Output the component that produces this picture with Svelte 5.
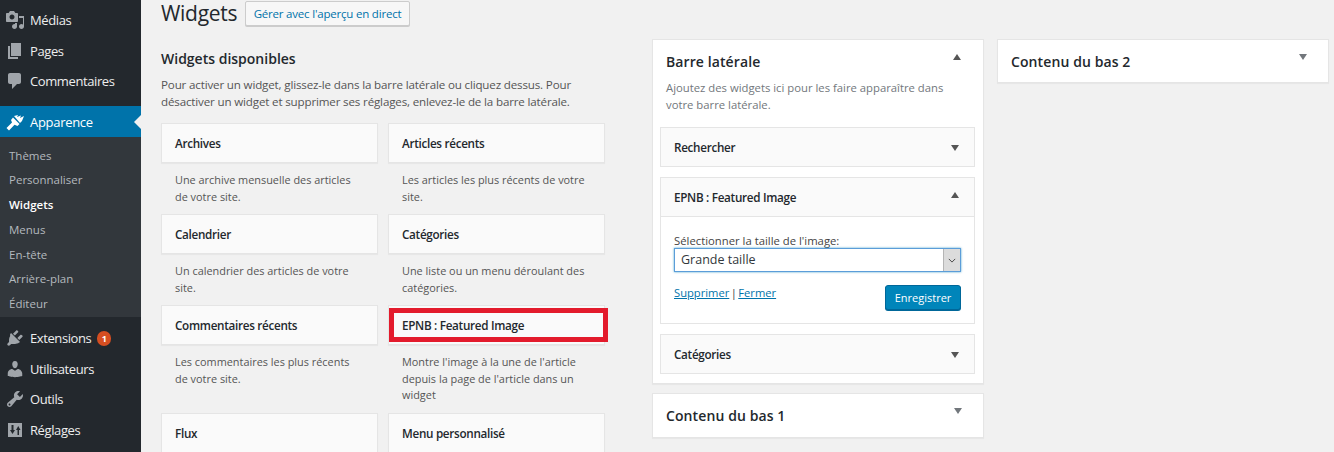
<script>
  const topMenu = [
    { label: 'Médias', icon: 'media' },
    { label: 'Pages', icon: 'pages' },
    { label: 'Commentaires', icon: 'comments' },
  ]
  const subMenu = ['Thèmes', 'Personnaliser', 'Widgets', 'Menus', 'En-tête', 'Arrière-plan', 'Éditeur']
  const bottomMenu = [
    { label: 'Extensions', icon: 'plugins', badge: 1 },
    { label: 'Utilisateurs', icon: 'users' },
    { label: 'Outils', icon: 'tools' },
    { label: 'Réglages', icon: 'settings' },
  ]
  const available = [
    { name: 'Archives', desc: 'Une archive mensuelle des articles de votre site.' },
    { name: 'Articles récents', desc: 'Les articles les plus récents de votre site.' },
    { name: 'Calendrier', desc: 'Un calendrier des articles de votre site.' },
    { name: 'Catégories', desc: 'Une liste ou un menu déroulant des catégories.' },
    { name: 'Commentaires récents', desc: 'Les commentaires les plus récents de votre site.' },
    { name: 'EPNB : Featured Image', desc: "Montre l'image à la une de l'article depuis la page de l'article dans un widget", marked: true },
    { name: 'Flux', desc: '' },
    { name: 'Menu personnalisé', desc: '' },
  ]
</script>

{#snippet icon(name)}
  <svg class="icon" viewBox="0 0 20 20" aria-hidden="true">
    {#if name === 'media'}
      <path d="M13 11V4c0-.55-.45-1-1-1h-1.670L9 1H5L3.670 3H2c-.55 0-1 .45-1 1v7c0 .55.45 1 1 1h10c.55 0 1-.45 1-1zM7 4.500c1.380 0 2.500 1.120 2.500 2.500S8.380 9.500 7 9.500 4.500 8.380 4.500 7 5.620 4.500 7 4.500zM14 6h5v10.500c0 1.380-1.120 2.500-2.500 2.500S14 17.880 14 16.500s1.120-2.500 2.500-2.500c.57 0 1.080.19 1.500.51V8h-4V6zm-4 8.050V13h2v3.500c0 1.380-1.120 2.500-2.500 2.500S7 17.880 7 16.500 8.120 14 9.500 14c.17 0 .34.02.5.05z" fill-rule="evenodd"/>
    {:else if name === 'pages'}
      <path d="M6 15V2h10v13H6zm-1 1h8v2H3V5h2v11z"/>
    {:else if name === 'comments'}
      <path d="M5 2h9c1.100 0 2 .9 2 2v7c0 1.100-.9 2-2 2h-2l-5 5v-5H5c-1.100 0-2-.9-2-2V4c0-1.100.9-2 2-2z"/>
    {:else if name === 'brush'}
      <path d="M9 4l4-1-1 2 4-1.500-1 2.500 4-2-2 5-2 2zM8 5.500l6.500 6.500-2 2-3-1.200L4 18.500 1.500 16l5.500-5.500-1-2.500z"/>
    {:else if name === 'plugins'}
      <path d="M13.110 4.360L9.870 7.600 8 5.730l3.240-3.240c.35-.34 1.050-.2 1.560.32.520.510.660 1.210.310 1.550zm-8 1.770l.910-1.120 9.010 9.010-1.190.840c-.710.710-2.630 1.160-3.820 1.160H6.140L4.900 17.260c-.59.590-1.540.590-2.120 0-.59-.58-.59-1.530 0-2.120l1.240-1.240v-1.880c0-1.190.450-3.110 1.090-3.890zm7.260 3.970l3.240-3.240c.34-.35 1.040-.21 1.550.310.520.510.660 1.210.310 1.550l-3.240 3.250z"/>
    {:else if name === 'users'}
      <path d="M10 9.250c-2.270 0-2.730-3.440-2.730-3.440C7 4.020 7.820 2 9.970 2c2.160 0 2.980 2.020 2.710 3.810 0 0-.41 3.440-2.680 3.440zm0 2.570L12.720 10c2.390 0 4.520 2.330 4.520 4.530v2.490s-3.650 1.130-7.240 1.130c-3.650 0-7.240-1.130-7.240-1.130v-2.490c0-2.250 1.940-4.480 4.470-4.480z"/>
    {:else if name === 'tools'}
      <path d="M16.680 9.770c-1.340 1.340-3.300 1.670-4.950.99l-5.410 6.520c-.99.990-2.590.990-3.570 0-.990-.980-.990-2.580 0-3.570l6.520-5.420c-.68-1.650-.35-3.610.99-4.950 1.280-1.280 3.120-1.620 4.720-1.060l-2.890 2.890 2.820 2.820 2.860-2.870c.53 1.580.18 3.390-1.090 4.670zM3.810 16.210c.4.390 1.030.39 1.420 0 .4-.4.4-1.030 0-1.420-.39-.4-1.020-.4-1.420 0-.39.390-.39 1.020 0 1.420z" fill-rule="evenodd"/>
    {:else}
      <path d="M3 3h14v14H3zM6.500 5v5H5l2.500 4 2.500-4H8.500V5zM12.500 15h1.500v-5h1.500L13.250 6 11 10h1.500z" fill-rule="evenodd"/>
    {/if}
  </svg>
{/snippet}

<div class="page">
  <nav class="sidebar">
    <ul class="menu first">
      {#each topMenu as item}
        <li>{@render icon(item.icon)}<span>{item.label}</span></li>
      {/each}
    </ul>
    <div class="current">
      {@render icon('brush')}<span>Apparence</span>
      <i class="notch"></i>
    </div>
    <ul class="submenu">
      {#each subMenu as item}
        <li class:on={item === 'Widgets'}>{item}</li>
      {/each}
    </ul>
    <ul class="menu last">
      {#each bottomMenu as item}
        <li>
          {@render icon(item.icon)}<span>{item.label}</span>
          {#if item.badge}<b class="badge">{item.badge}</b>{/if}
        </li>
      {/each}
    </ul>
  </nav>

  <main class="content">
    <div class="heading">
      <h1>Widgets</h1>
      <button class="live">Gérer avec l'aperçu en direct</button>
    </div>

    <div class="columns">
      <section class="available">
        <h2>Widgets disponibles</h2>
        <p class="intro">Pour activer un widget, glissez-le dans la barre latérale ou cliquez dessus. Pour désactiver un widget et supprimer ses réglages, enlevez-le de la barre latérale.</p>
        <div class="grid">
          {#each available as w}
            <div class="item">
              <div class="card">{w.name}{#if w.marked}<i class="mark"></i>{/if}</div>
              {#if w.desc}<p>{w.desc}</p>{/if}
            </div>
          {/each}
        </div>
      </section>

      <section class="areas">
        <div class="panel">
          <div class="panel-head"><h3>Barre latérale</h3><i class="arrow up"></i></div>
          <p class="panel-desc">Ajoutez des widgets ici pour les faire apparaître dans votre barre latérale.</p>
          <div class="slot">
            <div class="slot-head">Rechercher<i class="arrow down"></i></div>
          </div>
          <div class="slot">
            <div class="slot-head open">EPNB : Featured Image<i class="arrow up"></i></div>
            <div class="slot-body">
              <label for="size">Sélectionner la taille de l'image:</label>
              <div class="select" id="size">Grande taille<span class="drop"><svg viewBox="0 0 10 6"><path d="M1 1l4 4 4-4" fill="none" stroke="#444" stroke-width="1.2"/></svg></span></div>
              <div class="actions">
                <div class="links"><a href="#x">Supprimer</a> | <a href="#x">Fermer</a></div>
                <button class="save">Enregistrer</button>
              </div>
            </div>
          </div>
          <div class="slot">
            <div class="slot-head">Catégories<i class="arrow down"></i></div>
          </div>
        </div>
        <div class="panel closed">
          <div class="panel-head"><h3>Contenu du bas 1</h3><i class="arrow down light"></i></div>
        </div>
      </section>

      <section class="areas second">
        <div class="panel closed">
          <div class="panel-head"><h3>Contenu du bas 2</h3><i class="arrow down light"></i></div>
        </div>
      </section>
    </div>
  </main>
</div>

<style>
  :global(body) {
    margin: 0;
    background: #f1f1f1;
    overflow: hidden;
  }

  .page {
    display: flex;
    height: 452px;
    overflow: hidden;
    font-family: "Open Sans", "Noto Sans", sans-serif;
    font-size: 12.5px;
    color: #444;
  }

  ul {
    list-style: none;
    margin: 0;
    padding: 0;
  }

  .sidebar {
    width: 141px;
    flex-shrink: 0;
    background: #23282d;
    color: #eee;
  }

  .menu.first {
    padding-top: 5px;
    padding-bottom: 9px;
  }

  .menu li {
    display: flex;
    align-items: center;
    height: 30.6px;
    padding-left: 5px;
    font-size: 13px;
    letter-spacing: -0.4px;
  }

  .icon {
    width: 20px;
    height: 20px;
    margin-right: 5px;
    fill: #a0a5aa;
    flex-shrink: 0;
  }

  .current {
    position: relative;
    display: flex;
    align-items: center;
    box-sizing: border-box;
    height: 31px;
    padding: 1px 0 0 5px;
    background: #0073aa;
    color: #fff;
    font-size: 13px;
    letter-spacing: -0.3px;
  }

  .current .icon {
    fill: #fff;
  }

  .notch {
    position: absolute;
    right: 0;
    top: 9px;
    border: 7px solid transparent;
    border-left-width: 0;
    border-right-color: #f1f1f1;
  }

  .submenu {
    background: #32373c;
    padding: 7px 0 8px;
    height: 165px;
  }

  .submenu li {
    height: 24.7px;
    line-height: 24.7px;
    padding-left: 9px;
    font-size: 11.5px;
    color: #b4b9be;
  }

  .submenu li.on {
    color: #fff;
    font-weight: 600;
  }

  .menu.last {
    padding-top: 6px;
  }

  .badge {
    display: inline-flex;
    align-items: center;
    justify-content: center;
    width: 14px;
    height: 15px;
    margin-left: 6px;
    border-radius: 8px;
    background: #d54e21;
    color: #fff;
    font-size: 9px;
    letter-spacing: 0;
  }

  .content {
    flex: 1;
    min-width: 0;
    padding-left: 20px;
  }

  .heading {
    display: flex;
    align-items: center;
    gap: 9px;
    height: 26px;
  }

  h1 {
    margin: 0;
    font-size: 21px;
    line-height: 26px;
    font-weight: 400;
    color: #23282d;
    letter-spacing: -0.3px;
    width: 75px;
  }

  .live {
    width: 165px;
    height: 25px;
    padding: 0;
    border: 1px solid #ccc;
    border-radius: 2px;
    background: #f7f7f7;
    color: #0073aa;
    font: inherit;
    font-size: 11.5px;
    letter-spacing: -0.2px;
    box-shadow: 0 1px 0 #ccc;
    white-space: nowrap;
  }

  .columns {
    display: flex;
    align-items: flex-start;
  }

  .available {
    width: 444px;
    flex-shrink: 0;
    margin-right: 47px;
  }

  h2 {
    margin: 24px 0 0;
    font-size: 14px;
    line-height: 18px;
    font-weight: 600;
    color: #23282d;
  }

  .intro {
    margin: 8px 0 13px;
    font-size: 11.6px;
    letter-spacing: -0.16px;
    line-height: 17px;
    color: #555;
  }

  .grid {
    display: grid;
    grid-template-columns: 217px 217px;
    column-gap: 10px;
  }

  .card {
    position: relative;
    height: 38px;
    line-height: 38px;
    padding-left: 13px;
    background: #fafafa;
    border: 1px solid #e5e5e5;
    box-shadow: 0 1px 1px rgba(0, 0, 0, 0.04);
    width: 202px;
    font-size: 11.7px;
    font-weight: 600;
    color: #23282d;
    letter-spacing: -0.3px;
  }

  .item p {
    margin: 9px 14px 9px;
    font-size: 10.9px;
    line-height: 16.5px;
    color: #555;
  }

  .mark {
    position: absolute;
    left: 0;
    top: 2px;
    right: -4px;
    bottom: 2px;
    border: 5px solid #e31b2c;
  }

  .areas {
    width: 332px;
    flex-shrink: 0;
    margin-top: 13px;
  }

  .areas.second {
    margin-left: 13px;
  }

  .panel {
    background: #fff;
    border: 1px solid #e5e5e5;
    box-shadow: 0 1px 1px rgba(0, 0, 0, 0.04);
    box-sizing: border-box;
    padding: 0 8px 9px 7px;
    margin-bottom: 9px;
  }

  .panel.closed {
    height: 45px;
    padding: 0;
  }

  .second .panel.closed {
    height: 44px;
  }

  .panel-head {
    position: relative;
    box-sizing: border-box;
    padding: 12px 6px 0;
    height: 31px;
  }

  .panel.closed .panel-head {
    height: 43px;
    padding-left: 13px;
  }

  h3 {
    margin: 0;
    font-size: 14px;
    line-height: 19px;
    font-weight: 600;
    color: #23282d;
    letter-spacing: 0.1px;
  }

  .panel-desc {
    margin: 8px 20px 14px 6px;
    font-size: 11.3px;
    line-height: 17px;
    color: #72777c;
  }

  .slot {
    margin-bottom: 10px;
    background: #fff;
    border: 1px solid #e5e5e5;
  }

  .slot:last-child {
    margin-bottom: 0;
  }

  .slot-head {
    position: relative;
    height: 38px;
    line-height: 38px;
    padding-left: 13px;
    background: #fafafa;
    font-size: 11.7px;
    font-weight: 600;
    color: #23282d;
    letter-spacing: -0.3px;
  }

  .slot-head.open {
    border-bottom: 1px solid #e5e5e5;
  }

  .slot-body {
    padding: 17px 13px 13px;
    color: #444;
  }

  label {
    display: block;
    font-size: 11.3px;
    line-height: 14px;
    color: #444;
  }

  .select {
    position: relative;
    height: 22px;
    line-height: 22px;
    padding-left: 6px;
    border: 1px solid #5b9dd9;
    box-shadow: 0 0 2px rgba(30, 140, 190, 0.8);
    font-size: 12.5px;
    color: #32373c;
  }

  .drop {
    position: absolute;
    top: 0;
    right: 0;
    bottom: 0;
    width: 16px;
    display: flex;
    align-items: center;
    justify-content: center;
    background: #dcdcdc;
    border-left: 1px solid #b5b5b5;
  }

  .drop svg {
    width: 8px;
    height: 5px;
  }

  .actions {
    display: flex;
    justify-content: space-between;
    align-items: flex-start;
    margin-top: 12px;
  }

  .links {
    margin-top: 1px;
    font-size: 11.2px;
    line-height: 16px;
    word-spacing: -1.5px;
  }

  .links a {
    color: #0073aa;
  }

  .save {
    width: 76px;
    height: 25px;
    margin-top: 1px;
    padding: 0;
    border: 1px solid #006799;
    border-radius: 3px;
    background: #0085ba;
    box-shadow: 0 1px 0 #006799;
    color: #fff;
    font: inherit;
    font-size: 11px;
  }

  .arrow {
    position: absolute;
    right: 15px;
    top: 14px;
    border: 4px solid transparent;
  }

  .panel-head .arrow {
    right: 14px;
  }

  .panel.closed .arrow {
    right: 21px;
  }

  .arrow.up {
    border-top-width: 0;
    border-bottom: 6px solid #555;
  }

  .arrow.down {
    border-bottom-width: 0;
    border-top: 6px solid #555;
    top: 17px;
  }

  .arrow.down.light {
    border-top-color: #72777c;
    top: 14px;
  }
</style>
